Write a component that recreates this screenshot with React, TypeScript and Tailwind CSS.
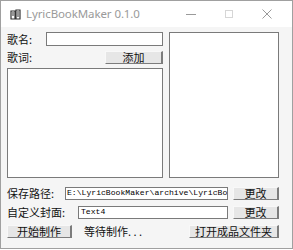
import React from 'react';

const cjk = "font-['SimSun','Noto_Sans_CJK_SC',sans-serif]";

function Btn({ w, children }: { w: string; children: React.ReactNode }) {
  return (
    <div
      className={`${w} h-[13px] shrink-0 flex items-center justify-center bg-[#e6e6e6] border-t border-l border-t-[#f8f8f8] border-l-[#f8f8f8] border-r-2 border-b border-r-[#7c7c7c] border-b-[#7c7c7c] text-[11px] leading-none text-[#111]`}
    >
      {children}
    </div>
  );
}

function Field({ w, children }: { w: string; children?: React.ReactNode }) {
  return (
    <div
      className={`${w} h-[13px] shrink-0 bg-white border border-[#7a7a7a] flex items-center px-[1px] overflow-hidden whitespace-nowrap font-['Liberation_Mono',monospace] text-[8.1px] leading-none text-black`}
    >
      {children}
    </div>
  );
}

export default function App() {
  return (
    <div className={`w-[293px] h-[250px] bg-white ${cjk}`}>
      <div className="w-[293px] h-[249px] border border-[#a0a0a0] bg-[#f5f5f5] flex flex-col">
        {/* title bar */}
        <div className="h-[26px] bg-white flex items-center shrink-0">
          <svg className="ml-[9px]" width="11" height="11" viewBox="0 0 11 11">
            <path d="M1 2h4v8H1z M6 1h4v9H6z" fill="none" stroke="#333" strokeWidth="1.2" />
            <path d="M2 4h2M2 6h2M7 3h2M7 5h2M7 7h2" stroke="#333" strokeWidth="1" />
          </svg>
          <span className="ml-[5px] font-['Noto_Sans',sans-serif] text-[11.5px] text-[#9a9a9a] tracking-[-0.1px]">
            LyricBookMaker 0.1.0
          </span>
          <div className="ml-auto flex items-center h-full">
            <div className="w-[38px] flex justify-center">
              <div className="w-[10px] h-px bg-[#9a9a9a]" />
            </div>
            <div className="w-[37px] flex justify-center">
              <div className="w-[8px] h-[8px] border border-[#d6d6d6]" />
            </div>
            <div className="w-[45px] flex justify-center pr-[6px]">
              <svg width="10" height="10" viewBox="0 0 10 10">
                <path d="M0.5 0.5l9 9M9.5 0.5l-9 9" stroke="#9a9a9a" strokeWidth="1" />
              </svg>
            </div>
          </div>
        </div>

        {/* top area */}
        <div className="flex px-[6px] pt-[5px] gap-[6px] text-[#111]">
          <div className="w-[156px] flex flex-col">
            <div className="flex items-center h-[14px]">
              <span className="w-[39px] text-[11px] leading-none">歌名:</span>
              <div className="w-[117px] h-[14px] bg-white border border-[#7a7a7a]" />
            </div>
            <div className="flex items-center justify-between mt-[5px] h-[13px]">
              <span className="text-[11px] leading-none">歌词:</span>
              <Btn w="w-[58px]">添加</Btn>
            </div>
            <div className="mt-[4px] h-[110px] bg-white border border-[#7a7a7a]" />
          </div>
          <div className="w-[110px] h-[146px] bg-white border border-[#7a7a7a]" />
        </div>

        {/* bottom rows */}
        <div className="flex flex-col px-[6px] w-[284px] text-[#111]">
          <div className="flex items-center mt-[9px]">
            <span className="w-[58px] text-[11px] leading-none">保存路径:</span>
            <Field w="w-[163px]">E:\LyricBookMaker\archive\LyricBo</Field>
            <div className="ml-[5px]">
              <Btn w="w-[46px]">更改</Btn>
            </div>
          </div>
          <div className="flex items-center mt-[6px]">
            <span className="w-[71px] text-[11px] leading-none">自定义封面:</span>
            <Field w="w-[150px]">
              <span className="pl-[1px]">Text4</span>
            </Field>
            <div className="ml-[5px]">
              <Btn w="w-[46px]">更改</Btn>
            </div>
          </div>
          <div className="flex items-center mt-[6px] w-[272px]">
            <Btn w="w-[65px]">开始制作</Btn>
            <span className="ml-[12px] text-[11px] leading-none">等待制作. . .</span>
            <div className="ml-auto">
              <Btn w="w-[90px]">打开成品文件夹</Btn>
            </div>
          </div>
        </div>
      </div>
    </div>
  );
}
